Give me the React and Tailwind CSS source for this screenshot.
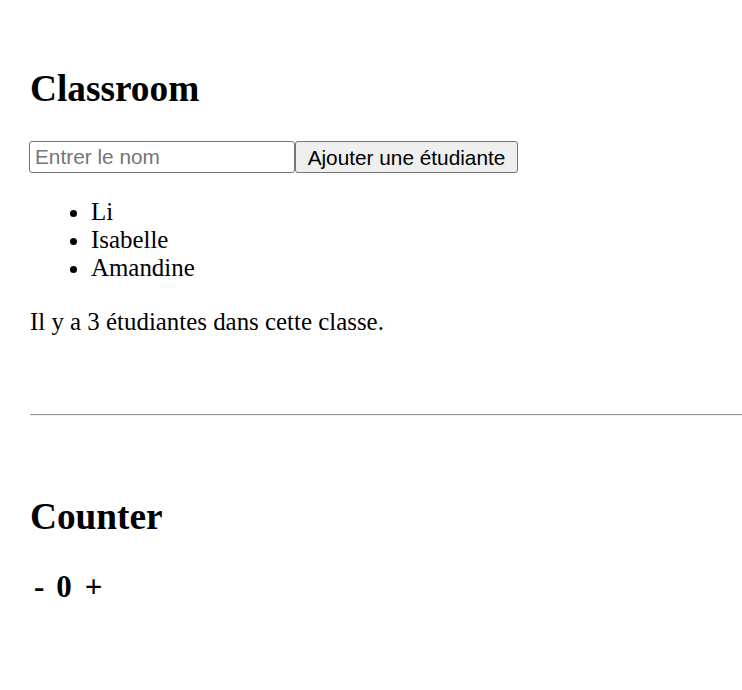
import React from "react";

export default function App() {
  return (
    <div className="min-h-[690px] bg-white pl-[30px] pt-[68px] text-black" style={{ fontFamily: '"Liberation Serif", "Times New Roman", serif' }}>
      <section>
        <h1 className="m-0 text-[37.3px] font-bold leading-[41px]">Classroom</h1>
        <div className="-ml-px mt-[32px] flex h-[32px] items-stretch">
          <input
            type="text"
            placeholder="Entrer le nom"
            className="box-border h-[32px] w-[266px] rounded-[3px] border border-[#767676] bg-white px-[5px] text-[20.8px] text-black placeholder:text-[#757575] outline-none"
            style={{ fontFamily: '"Liberation Sans", Arial, sans-serif' }}
          />
          <button
            className="box-border h-[32px] w-[223px] rounded-[3px] border border-[#767676] bg-[#efefef] px-[9px] text-[20.8px] text-black"
            style={{ fontFamily: '"Liberation Sans", Arial, sans-serif' }}
          >
            Ajouter une étudiante
          </button>
        </div>
        <ul className="mt-[25px] list-disc pl-[61px] text-[24.9px] leading-[28px]">
          <li>Li</li>
          <li>Isabelle</li>
          <li>Amandine</li>
        </ul>
        <p className="mt-[26px] text-[24.9px] leading-[28px]">Il y a 3 étudiantes dans cette classe.</p>
      </section>
      <hr className="mt-[78px] h-0 border-0 border-t border-b border-t-[#9a9a9a] border-b-[#eeeeee]" />
      <section>
        <h1 className="mt-[80px] text-[37.3px] font-bold leading-[41px]">Counter</h1>
        <div className="mt-[33px] flex items-baseline text-[31px] font-bold leading-[34px]">
          <span className="ml-[4px]">-</span>
          <span className="ml-[12px]">0</span>
          <span className="ml-[13px]">+</span>
        </div>
      </section>
    </div>
  );
}
